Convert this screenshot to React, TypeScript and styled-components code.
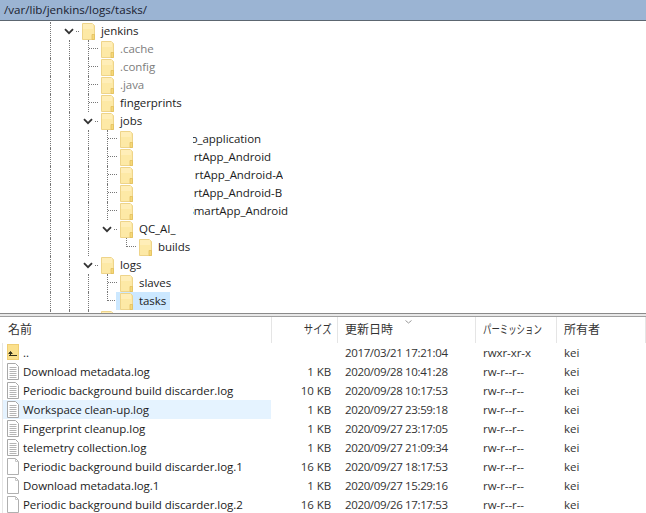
import React from "react"
import styled, { createGlobalStyle } from "styled-components"

const GlobalStyle = createGlobalStyle`
  html, body {
    margin: 0;
    padding: 0;
    background: #fff;
    overflow: hidden;
  }
`

type TreeRow = {
  guides: boolean[]
  kind: "open" | "tee" | "end"
  name: string
  muted?: boolean
  selected?: boolean
  // 塗りつぶされた部分: テキストの開始位置と表示幅
  hiddenGap?: number
  clipWidth?: number
}

const treeRows: TreeRow[] = [
  { guides: [true], kind: "open", name: "jenkins" },
  { guides: [true, true], kind: "tee", name: ".cache", muted: true },
  { guides: [true, true], kind: "tee", name: ".config", muted: true },
  { guides: [true, true], kind: "tee", name: ".java", muted: true },
  { guides: [true, true], kind: "tee", name: "fingerprints" },
  { guides: [true, true], kind: "open", name: "jobs" },
  { guides: [true, true, true], kind: "tee", name: "o_application", hiddenGap: 54, clipWidth: 68 },
  { guides: [true, true, true], kind: "tee", name: "rtApp_Android", hiddenGap: 54, clipWidth: 78 },
  { guides: [true, true, true], kind: "tee", name: "rtApp_Android-A", hiddenGap: 54, clipWidth: 90 },
  { guides: [true, true, true], kind: "tee", name: "rtApp_Android-B", hiddenGap: 54, clipWidth: 89 },
  { guides: [true, true, true], kind: "tee", name: "SmartApp_Android", hiddenGap: 54, clipWidth: 95 },
  { guides: [true, true, true], kind: "open", name: "QC_AI_" },
  { guides: [true, true, true, false], kind: "end", name: "builds" },
  { guides: [true, true], kind: "open", name: "logs" },
  { guides: [true, true, true], kind: "tee", name: "slaves" },
  { guides: [true, true, true], kind: "end", name: "tasks", selected: true },
  { guides: [true, true], kind: "tee", name: "" },
]

type FileRow = {
  icon: "up" | "text" | "blank"
  name: string
  size: string
  date: string
  perm: string
  hover?: boolean
}

const fileRows: FileRow[] = [
  { icon: "up", name: "..", size: "", date: "2017/03/21 17:21:04", perm: "rwxr-xr-x" },
  { icon: "text", name: "Download metadata.log", size: "1 KB", date: "2020/09/28 10:41:28", perm: "rw-r--r--" },
  { icon: "text", name: "Periodic background build discarder.log", size: "10 KB", date: "2020/09/28 10:17:53", perm: "rw-r--r--" },
  { icon: "text", name: "Workspace clean-up.log", size: "1 KB", date: "2020/09/27 23:59:18", perm: "rw-r--r--", hover: true },
  { icon: "text", name: "Fingerprint cleanup.log", size: "1 KB", date: "2020/09/27 23:17:05", perm: "rw-r--r--" },
  { icon: "text", name: "telemetry collection.log", size: "1 KB", date: "2020/09/27 21:09:34", perm: "rw-r--r--" },
  { icon: "blank", name: "Periodic background build discarder.log.1", size: "16 KB", date: "2020/09/27 18:17:53", perm: "rw-r--r--" },
  { icon: "blank", name: "Download metadata.log.1", size: "1 KB", date: "2020/09/27 15:29:16", perm: "rw-r--r--" },
  { icon: "blank", name: "Periodic background build discarder.log.2", size: "16 KB", date: "2020/09/26 17:17:53", perm: "rw-r--r--" },
]

const FolderIcon = () => (
  <svg width="13" height="17" viewBox="0 0 13 17">
    <path d="M.5 .5H10L12.5 2.5V16.5H.5Z" fill="#fde9a6" stroke="#eed48a" />
    <rect x="1" y="1" width="10" height="5" fill="#ffeeb8" />
    <path d="M10 16.5V11.5H12.5V16.5Z" fill="#f6d878" stroke="#e0bb58" strokeWidth=".7" />
  </svg>
)

const Chevron = () => (
  <svg width="10" height="7" viewBox="0 0 10 7">
    <path d="M1 1.2 5 5.2 9 1.2" fill="none" stroke="#333" strokeWidth="1.8" />
  </svg>
)

const TextFileIcon = () => (
  <svg width="14" height="17" viewBox="0 0 14 17">
    <path d="M.5 .5H8.5L11.5 3.5V16.5H.5Z" fill="#fff" stroke="#a8a8a8" />
    <path d="M2.5 4.5H9.5M2.5 6.5H9.5M2.5 8.5H9.5M2.5 10.5H9.5M2.5 12.5H9.5M2.5 14.5H9.5" stroke="#b4b4b4" />
  </svg>
)

const BlankFileIcon = () => (
  <svg width="14" height="17" viewBox="0 0 14 17">
    <path d="M.5 .5H8.5L11.5 3.5V16.5H.5Z" fill="#fff" stroke="#b0b0b0" />
    <path d="M8.5 .5V3.5H11.5" fill="none" stroke="#c8c8c8" />
  </svg>
)

const UpFolderIcon = () => (
  <svg width="14" height="17" viewBox="0 0 14 17">
    <rect x=".5" y=".5" width="11" height="15" fill="#fbe08c" stroke="#efce74" />
    <path d="M2 11.5H10M3.5 11.5V8.5M3.5 7.5 1.8 9.5H5.2Z" fill="#33301c" stroke="#33301c" strokeWidth="1" />
  </svg>
)

const App: React.FC = () => {
  return (
    <Page>
      <GlobalStyle />
      <PathBar>/var/lib/jenkins/logs/tasks/</PathBar>
      <TreePane>
        {treeRows.map((row, i) => (
          <TreeLine key={i}>
            {row.guides.map((on, g) => (
              <Guide key={g} $on={on} />
            ))}
            {row.kind === "open" ? (
              <Expander>
                <Chevron />
                <ExpanderDots />
              </Expander>
            ) : (
              <Connector $last={row.kind === "end"}>
                <ConnectorStub $last={row.kind === "end"} />
              </Connector>
            )}
            <TreeItem $selected={row.selected}>
              <FolderIcon />
              {row.hiddenGap ? (
                <ClippedName $gap={row.hiddenGap} $width={row.clipWidth || 0}>
                  {row.name}
                </ClippedName>
              ) : (
                <TreeName $muted={row.muted}>{row.name}</TreeName>
              )}
            </TreeItem>
          </TreeLine>
        ))}
      </TreePane>
      <Splitter />
      <ListPane>
        <ListHeader>
          <HeadCell>名前</HeadCell>
          <HeadCell $right>
            <NarrowKana $scale={0.78} $origin="right">サイズ</NarrowKana>
          </HeadCell>
          <HeadCell>
            更新日時
            <SortMark width="7" height="4" viewBox="0 0 7 4">
              <path d="M.5 .5 3.5 3 6.5 .5" fill="none" stroke="#9a9a9a" />
            </SortMark>
          </HeadCell>
          <HeadCell>
            <NarrowKana $scale={0.7} $origin="left">パーミッション</NarrowKana>
          </HeadCell>
          <HeadCell>所有者</HeadCell>
        </ListHeader>
        {fileRows.map((file) => (
          <ListRow key={file.name} $hover={file.hover}>
            <NameCell>
              <FileIconBox>
                {file.icon === "up" && <UpFolderIcon />}
                {file.icon === "text" && <TextFileIcon />}
                {file.icon === "blank" && <BlankFileIcon />}
              </FileIconBox>
              {file.name}
            </NameCell>
            <SizeCell>{file.size}</SizeCell>
            <DateCell>{file.date}</DateCell>
            <Cell>{file.perm}</Cell>
            <Cell>kei</Cell>
          </ListRow>
        ))}
      </ListPane>
    </Page>
  )
}

export default App

const Page = styled.div`
  width: 646px;
  height: 513px;
  display: flex;
  flex-direction: column;
  overflow: hidden;
  background: #fff;
  color: #1c1c1c;
  font-family: "Open Sans", "Noto Sans CJK JP", sans-serif;
  font-size: 11.5px;
  letter-spacing: -0.06px;
`
const PathBar = styled.div`
  flex: 0 0 20px;
  height: 20px;
  padding-left: 4px;
  line-height: 20px;
  background: #9bb4d3;
  border-bottom: 1px solid #5c6670;
  font-size: 11.6px;
  letter-spacing: 0;
  color: #1a2230;
`
const TreePane = styled.div`
  flex: 0 0 292px;
  height: 292px;
  overflow: hidden;
  padding-left: 41px;
  box-sizing: border-box;
  padding-top: 1px;
`
const TreeLine = styled.div`
  display: flex;
  height: 18px;
  line-height: 18px;
`
const Guide = styled.div<{ $on: boolean }>`
  flex: 0 0 10px;
  margin-left: 9px;
  border-left: 1px dotted ${(p) => (p.$on ? "#777" : "transparent")};
  box-sizing: border-box;
`
const Connector = styled.div<{ $last: boolean }>`
  flex: 0 0 10px;
  margin-left: 9px;
  box-sizing: border-box;
  border-left: 1px dotted ${(p) => (p.$last ? "transparent" : "#777")};
`
const ConnectorStub = styled.div<{ $last: boolean }>`
  height: 9px;
  box-sizing: border-box;
  margin-left: ${(p) => (p.$last ? "-1px" : "0")};
  border-bottom: 1px dotted #777;
  border-left: ${(p) => (p.$last ? "1px dotted #777" : "none")};
`
const Expander = styled.div`
  flex: 0 0 19px;
  display: flex;
  align-items: center;
  padding-left: 4px;
  box-sizing: border-box;
  gap: 2px;
`
const ExpanderDots = styled.div`
  width: 3px;
  border-top: 1px dotted #777;
`
const TreeItem = styled.div<{ $selected?: boolean }>`
  display: flex;
  align-items: center;
  height: 18px;
  margin-left: -1px;
  padding: 0 4px;
  background: ${(p) => (p.$selected ? "#cce8ff" : "transparent")};
`
const TreeName = styled.span<{ $muted?: boolean }>`
  margin-left: 6px;
  white-space: nowrap;
  color: ${(p) => (p.$muted ? "#7d7d7d" : "inherit")};
`
const ClippedName = styled.span<{ $gap: number; $width: number }>`
  display: flex;
  justify-content: flex-end;
  margin-left: ${(p) => p.$gap + 6}px;
  width: ${(p) => p.$width}px;
  overflow: hidden;
  white-space: nowrap;
`
const Splitter = styled.div`
  flex: 0 0 4px;
  box-sizing: border-box;
  background: #e8e8e8;
  border-top: 1px solid #8a8a8a;
  border-bottom: 1px solid #a0a0a0;
`
const ListPane = styled.div`
  flex: 1;
  min-height: 0;
`
const columns = "272px 66px 138px 81px 1fr"
const ListHeader = styled.div`
  display: grid;
  grid-template-columns: ${columns};
  height: 26px;
`
const HeadCell = styled.div<{ $right?: boolean }>`
  position: relative;
  box-sizing: border-box;
  padding: ${(p) => (p.$right ? "0 5px 0 0" : "0 0 0 7px")};
  text-align: ${(p) => (p.$right ? "right" : "left")};
  line-height: 25px;
  font-size: 12px;
  letter-spacing: 0;
  border-right: 1px solid #e5e5e5;
  white-space: nowrap;
  color: #333;
  &:first-child {
    padding-left: 8px;
  }
`
const NarrowKana = styled.span<{ $scale: number; $origin: string }>`
  display: inline-block;
  transform: scaleX(${(p) => p.$scale});
  transform-origin: ${(p) => p.$origin} center;
`
const SortMark = styled.svg`
  position: absolute;
  top: 3px;
  left: 67px;
`
const ListRow = styled.div<{ $hover?: boolean }>`
  display: grid;
  grid-template-columns: ${columns};
  height: 19px;
  line-height: 19px;
  background: linear-gradient(
    to right,
    #fff 2px,
    #e6e6e6 2px,
    #e6e6e6 3px,
    ${(p) => (p.$hover ? "#e5f3ff" : "#fff")} 3px,
    ${(p) => (p.$hover ? "#e5f3ff" : "#fff")} 271px,
    #fff 271px
  );
`
const NameCell = styled.div`
  display: flex;
  align-items: center;
  padding-left: 7px;
  white-space: nowrap;
`
const FileIconBox = styled.span`
  display: flex;
  width: 16px;
  flex: 0 0 16px;
`
const SizeCell = styled.div`
  text-align: right;
  padding-right: 7px;
  color: #333;
`
const Cell = styled.div`
  padding-left: 7px;
  white-space: nowrap;
  color: #333;
`
const DateCell = styled(Cell)`
  letter-spacing: -0.36px;
`
